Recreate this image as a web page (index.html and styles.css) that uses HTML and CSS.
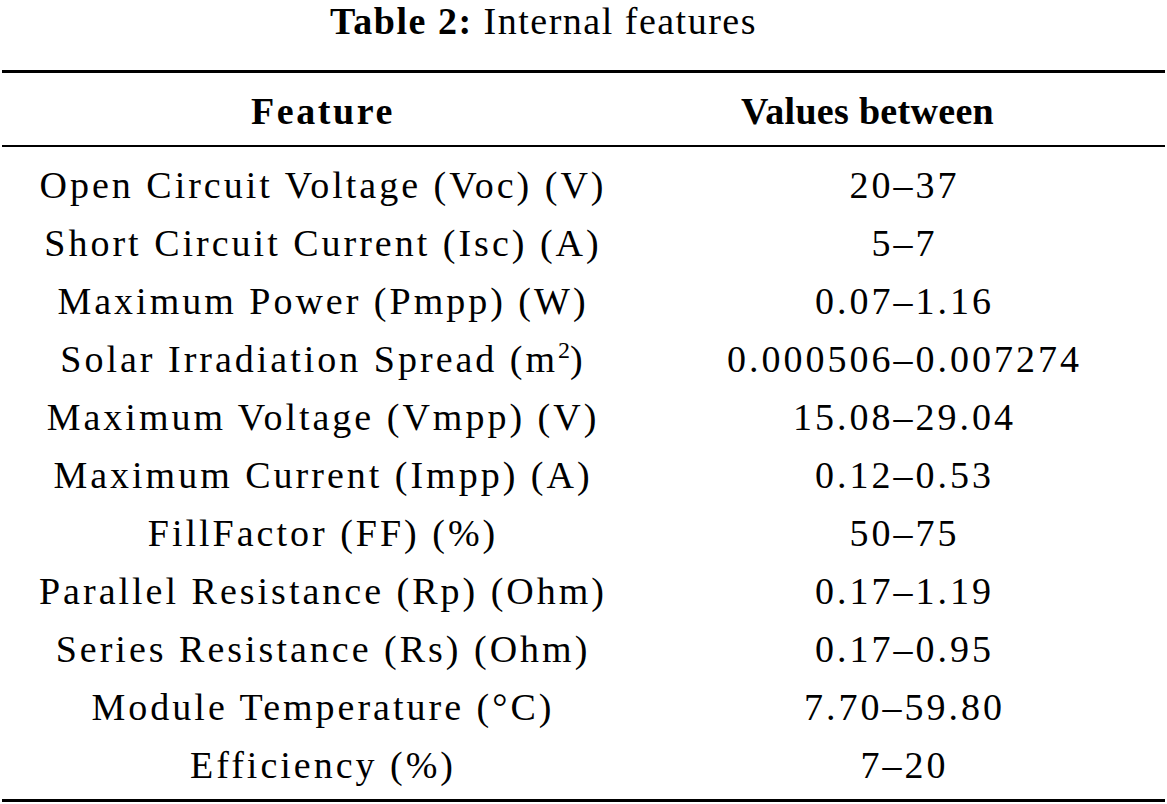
FILE: index.html
```html
<!DOCTYPE html>
<html lang="en">
<head>
<meta charset="utf-8">
<title>Table 2: Internal features</title>
<link rel="stylesheet" href="styles.css">
</head>
<body>
<div class="page">
  <div class="caption"><span class="caption-label">Table 2:</span> Internal features</div>
  <table class="data">
    <thead>
      <tr>
        <th class="col-feature">Feature</th>
        <th class="col-values">Values between</th>
      </tr>
    </thead>
    <tbody>
      <tr><td>Open Circuit Voltage (Voc) (V)</td><td>20–37</td></tr>
      <tr><td>Short Circuit Current (Isc) (A)</td><td>5–7</td></tr>
      <tr><td>Maximum Power (Pmpp) (W)</td><td>0.07–1.16</td></tr>
      <tr><td>Solar Irradiation Spread (m<sup>2</sup>)</td><td>0.000506–0.007274</td></tr>
      <tr><td>Maximum Voltage (Vmpp) (V)</td><td>15.08–29.04</td></tr>
      <tr><td>Maximum Current (Impp) (A)</td><td>0.12–0.53</td></tr>
      <tr><td>FillFactor (FF) (%)</td><td>50–75</td></tr>
      <tr><td>Parallel Resistance (Rp) (Ohm)</td><td>0.17–1.19</td></tr>
      <tr><td>Series Resistance (Rs) (Ohm)</td><td>0.17–0.95</td></tr>
      <tr><td>Module Temperature (°C)</td><td>7.70–59.80</td></tr>
      <tr><td>Efficiency (%)</td><td>7–20</td></tr>
    </tbody>
  </table>
</div>
</body>
</html>
```
FILE: styles.css
```css
html, body {
  margin: 0;
  padding: 0;
  background: #ffffff;
}

.page {
  width: 1167px;
  font-family: "Liberation Serif", "DejaVu Serif", serif;
  font-size: 38px;
  color: #000000;
}

.caption {
  height: 70px;
  line-height: 42px;
  text-align: center;
  padding-right: 80px;
  box-sizing: border-box;
  letter-spacing: 1.5px;
}

.caption-label {
  font-weight: bold;
}

.data {
  margin-left: 2px;
  width: 1163px;
  border-collapse: collapse;
  border-spacing: 0;
  border-top: 3px solid #000;
  border-bottom: 3px solid #000;
}

.data th,
.data td {
  padding: 0;
  text-align: center;
  font-weight: normal;
  line-height: 42px;
}

.data th {
  font-weight: bold;
  padding-top: 17px;
  padding-bottom: 13px;
  border-bottom: 2px solid #000;
}

.col-feature {
  width: 642px;
  letter-spacing: 2.6px;
}

.col-values {
  padding-right: 74px !important;
  letter-spacing: 0.3px;
}

.data td {
  height: 58px;
  line-height: 58px;
  letter-spacing: 3px;
}

.data tbody tr:first-child td {
  padding-top: 9px;
}

.data tbody tr:last-child td {
  padding-bottom: 5px;
}

sup {
  font-size: 24px;
  line-height: 0;
  vertical-align: 14px;
  letter-spacing: 0;
}
```
